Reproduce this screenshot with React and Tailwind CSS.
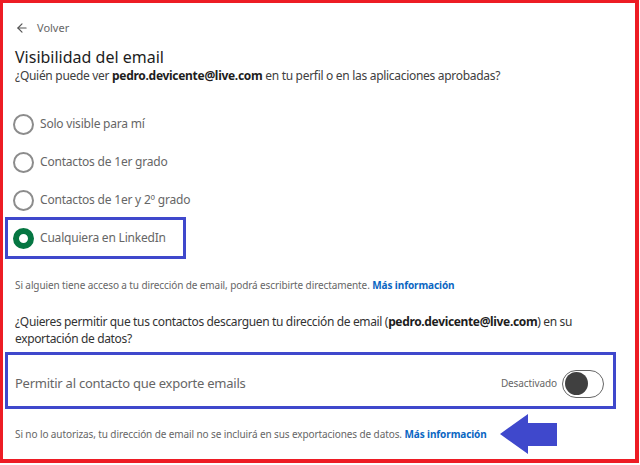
import React from "react";
import { ArrowLeft } from "lucide-react";

const font = { fontFamily: '"Noto Sans", "Open Sans", sans-serif' };

const Radio = ({ checked }) =>
  checked ? (
    <span className="w-[21px] h-[21px] rounded-full border-[6px] border-[#057642] bg-white shrink-0" />
  ) : (
    <span className="w-[21px] h-[21px] rounded-full border-2 border-[#8c8c8c] bg-white shrink-0" />
  );

const options = ["Solo visible para mí", "Contactos de 1er grado", "Contactos de 1er y 2º grado"];

const App = () => {
  return (
    <div className="w-[640px] h-[465px] bg-white" style={font}>
      <div className="w-[639px] h-[463px] border-l-[3px] border-t-[3px] border-r-[4px] border-b-[4px] border-[#ed1c24] pl-[2px]">
        {/* back */}
        <div className="flex items-center gap-[8px] pl-[10px] pt-[15px] h-[35px] text-[11px] text-[#666]">
          <ArrowLeft size={14} strokeWidth={2} className="text-[#555]" />
          <span>Volver</span>
        </div>

        {/* heading */}
        <div className="pl-[10px] mt-[9px]">
          <h1 className="text-[16px] leading-[20px] text-[#1d1d1d]">Visibilidad del email</h1>
          <p className="text-[12px] leading-[18px] tracking-[-0.3px] text-[#404040]">
            ¿Quién puede ver <b className="text-[#1d1d1d]">pedro.devicente@live.com</b> en tu perfil o en las
            aplicaciones aprobadas?
          </p>
        </div>

        {/* options */}
        <div className="mt-[20px]">
          {options.map((o) => (
            <div
              key={o}
              className="flex items-center gap-[6px] h-[38px] pl-[8px] text-[12px] tracking-[-0.2px] text-[#666]"
            >
              <Radio />
              <span>{o}</span>
            </div>
          ))}
          <div className="flex items-center gap-[6px] w-[181px] h-[42px] -mt-[2px] border-[3px] border-[#3f48cc] pl-[5px] text-[12px] tracking-[-0.2px] text-[#666]">
            <Radio checked />
            <span>Cualquiera en LinkedIn</span>
          </div>
        </div>

        {/* info */}
        <p className="mt-[18px] pl-[10px] text-[10px] leading-[16px] tracking-[-0.1px] text-[#666]">
          Si alguien tiene acceso a tu dirección de email, podrá escribirte directamente.{" "}
          <a className="font-bold text-[#0a66c2]">Más información</a>
        </p>

        <p className="mt-[20px] pl-[10px] text-[12px] leading-[17px] tracking-[-0.35px] text-[#333]">
          ¿Quieres permitir que tus contactos descarguen tu dirección de email (
          <b className="text-[#1d1d1d]">pedro.devicente@live.com</b>) en su
          <br />
          exportación de datos?
        </p>

        {/* toggle box */}
        <div className="mt-[5px] w-[611px] h-[57px] border-[3px] border-[#3f48cc] flex items-center justify-between pt-[6px] pl-[7px] pr-[9px]">
          <span className="text-[13px] tracking-[-0.25px] text-[#666]">Permitir al contacto que exporte emails</span>
          <div className="flex items-center gap-[5px]">
            <span className="text-[10px] tracking-[-0.1px] text-[#666]">Desactivado</span>
            <span className="w-[42px] h-[28px] rounded-full border-[1.5px] border-[#666] flex items-center pl-[2px]">
              <span className="w-[23px] h-[23px] rounded-full bg-[#404040]" />
            </span>
          </div>
        </div>

        {/* note + arrow */}
        <div className="mt-[5px] h-[40px] flex items-center pl-[10px]">
          <p className="text-[10px] tracking-[-0.1px] text-[#666]">
            Si no lo autorizas, tu dirección de email no se incluirá en sus exportaciones de datos.{" "}
            <a className="font-bold text-[#0a66c2]">Más información</a>
          </p>
          <svg width="58" height="41" viewBox="0 0 58 41" className="ml-[13px]">
            <polygon points="0,20 28,0 28,9 57,9 57,32 28,32 28,40" fill="#3f48cc" />
          </svg>
        </div>
      </div>
    </div>
  );
};

export default App;
